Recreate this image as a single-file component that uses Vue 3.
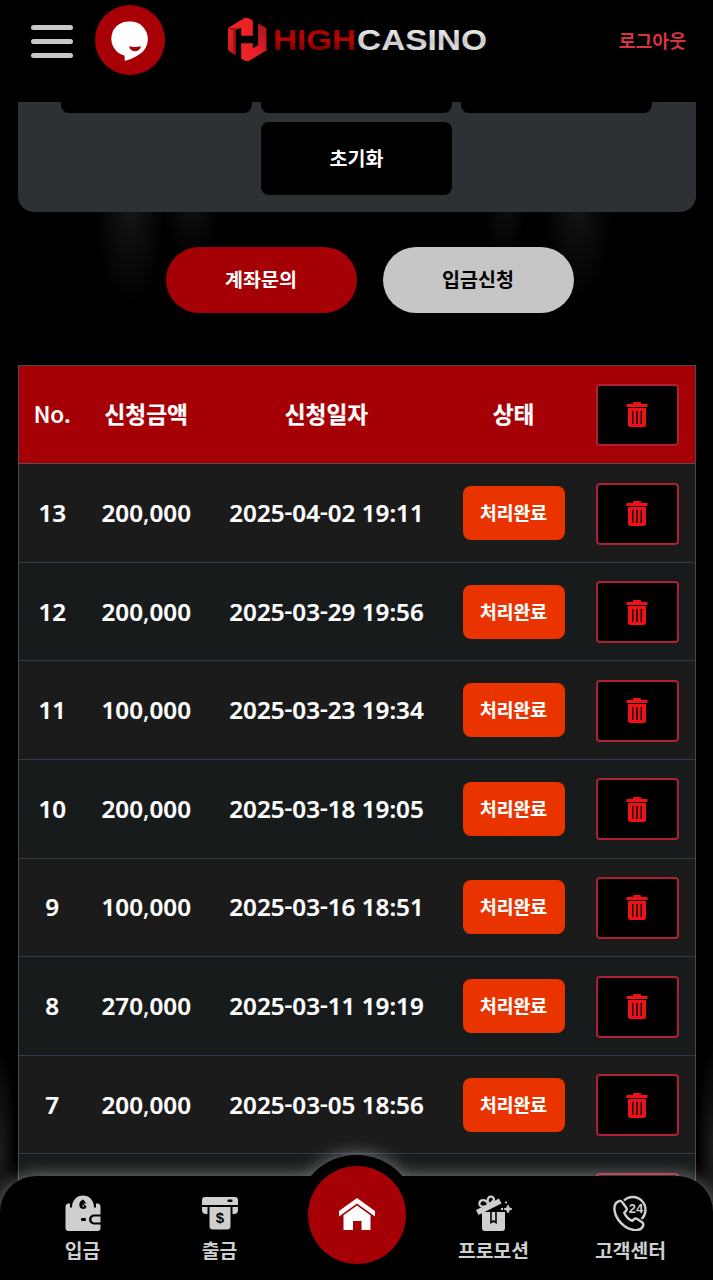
<template>
  <div class="page">
    <header class="header">
      <div class="header-left">
        <button class="menu-btn" aria-label="메뉴">
          <span></span>
          <span></span>
          <span></span>
        </button>
        <button class="chat-btn" aria-label="채팅">
          <svg width="70" height="70" viewBox="0 0 70 70">
            <path d="M35.500 16.500A17.300 17.300 0 0 1 52.800 34c0 8-4.500 13.500-11 17-4 2-8 4-12 5l-.3-5.500A17.300 17.300 0 0 1 35.500 16.500z" fill="#fff" />
            <path d="M34 41.300c3.700 1 8.300 1 12 0-.7 3.500-3.200 5-6 5s-5.300-1.500-6-5z" fill="#a90008" />
          </svg>
        </button>
      </div>

      <svg class="logo" width="264" height="48" viewBox="0 0 264 48">
        <defs>
          <linearGradient id="markTop" x1="0" y1="1" x2="1" y2="0">
            <stop offset="0" stop-color="#c41a22" />
            <stop offset="0.500" stop-color="#f02226" />
            <stop offset="1" stop-color="#ea1f24" />
          </linearGradient>
          <linearGradient id="markBottom" x1="0" y1="1" x2="1" y2="0">
            <stop offset="0" stop-color="#f6222a" />
            <stop offset="0.500" stop-color="#e31f26" />
            <stop offset="1" stop-color="#9e141b" />
          </linearGradient>
          <linearGradient id="highFill" x1="0" y1="0" x2="0" y2="1">
            <stop offset="0" stop-color="#8d0000" />
            <stop offset="0.450" stop-color="#bd0600" />
            <stop offset="1" stop-color="#5c0000" />
          </linearGradient>
          <linearGradient id="casinoFill" x1="0" y1="0" x2="0" y2="1">
            <stop offset="0" stop-color="#fff" />
            <stop offset="0.550" stop-color="#c9c9c9" />
            <stop offset="1" stop-color="#ededed" />
          </linearGradient>
        </defs>
        <path d="M3 12 19 2.300q2.500-1.200 5 0l3.800 2.200v15.200H16.200v-8L10.500 14v25L3 34.500z" fill="url(#markTop)" />
        <path d="M3 12 16.200 11.700 10.500 14v25L8 37.500V15z" fill="#a5131b" />
        <path d="M16.200 27.300h11.600v5l5.400-3V7.300l8.300 5V34.500L24.500 44.500q-2.500 1.200-5 0l-3.300-2z" fill="url(#markBottom)" />
        <text x="48" y="34" class="logo-text" fill="url(#highFill)" textLength="83" lengthAdjust="spacingAndGlyphs">HIGH</text>
        <text x="132" y="34" class="logo-text" fill="url(#casinoFill)" textLength="130" lengthAdjust="spacingAndGlyphs">CASINO</text>
      </svg>

      <a class="logout">로그아웃</a>
    </header>

    <main class="content">
      <section class="amount-panel">
        <button class="amount-btn"></button>
        <button class="amount-btn"></button>
        <button class="amount-btn"></button>
        <button class="amount-btn">초기화</button>
      </section>

      <div class="actions">
        <button class="pill pill-red">계좌문의</button>
        <button class="pill pill-gray">입금신청</button>
      </div>

      <section class="table">
        <div class="row row-head">
          <div class="cell no">No.</div>
          <div class="cell">신청금액</div>
          <div class="cell">신청일자</div>
          <div class="cell">상태</div>
          <div class="cell">
            <button class="trash-btn" aria-label="전체삭제">
              <svg width="22" height="25" viewBox="0 0 22 25">
                <path :d="trashPath" fill="#ee1118" fill-rule="evenodd" />
              </svg>
            </button>
          </div>
        </div>
        <div v-for="item in deposits" :key="item.no" class="row">
          <div class="cell">{{ item.no }}</div>
          <div class="cell">
            <span v-for="(part, i) in splitMarks(item.amount)" :key="i" :class="{ comma: part === ',' }">{{ part }}</span>
          </div>
          <div class="cell">
            <span v-for="(part, i) in splitMarks(item.date)" :key="i" :class="{ dash: part === '-' }">{{ part }}</span>
          </div>
          <div class="cell"><span class="badge">처리완료</span></div>
          <div class="cell">
            <button class="trash-btn" aria-label="삭제">
              <svg width="22" height="25" viewBox="0 0 22 25">
                <path :d="trashPath" fill="#ee1118" fill-rule="evenodd" />
              </svg>
            </button>
          </div>
        </div>
      </section>
    </main>

    <nav class="bottom-nav">
      <div class="nav-shape">
        <span class="nav-bump"></span>
        <span class="nav-bar"></span>
      </div>
      <div class="nav-items">
        <a class="nav-item">
          <svg width="36" height="36" viewBox="0 0 36 36">
            <path d="M3 8.500h2v4h2C7 5 12 .5 18 .5S29 5 29 12.500h2v-4h2q2.500.5 2.500 3v8H29a5 5 0 0 0 0 10h6.500V33q0 3-3 3h-29q-3 0-3-3V11.500q0-2.500 2.500-3z" fill="#cfcfcf" />
            <path d="M35.500 21.500H29.500a3 3 0 0 0 0 6h6z" fill="#cfcfcf" />
            <rect x="16" y="23" width="5" height="3" rx="1" fill="#000" />
            <path d="M18 4.500 21.500 8.500h-3.300l3.300 3q-.5 2.500-3.500 2.500-3.700-.5-3.700-4.500Q14.500 6 18 4.500z" fill="#000" />
            <path d="M17.500 9v2.500l2 .8z" fill="#cfcfcf" />
          </svg>
          <span>입금</span>
        </a>
        <a class="nav-item">
          <svg width="36" height="36" viewBox="0 0 36 36">
            <path d="M3 2h30q3 0 3 3v5H0V5q0-3 3-3zM0 12h5.500v7H4q-4 0-4-4zM30.500 12H36v3q0 4-4 4h-1.500zM7.500 12h21v19q0 3.500-3.500 3.500H11q-3.500 0-3.500-3.500z" fill="#cfcfcf" />
            <rect x="25.500" y="4.500" width="5" height="2.500" rx="1" fill="#000" />
            <text x="18" y="27.500" class="dollar" text-anchor="middle">$</text>
          </svg>
          <span>출금</span>
        </a>
        <a class="home-btn" aria-label="홈">
          <svg width="36" height="32" viewBox="0 0 36 32">
            <path d="M18 0 36 13v5.500L18 5.500 0 18.500V13z" fill="#fff" />
            <path d="M18 7.500 31.500 17.300V32H22.500v-9h-8.500v9H4.500V17.300z" fill="#fff" />
          </svg>
        </a>
        <a class="nav-item">
          <svg width="36" height="36" viewBox="0 0 36 36">
            <path d="M6 17h23v16q0 3-3 3H9q-3 0-3-3z" fill="#cfcfcf" />
            <path d="M15 17v10.500l2.500-1.500 2.500 1.500V17" fill="none" stroke="#000" stroke-width="1.600" />
            <path d="M0 15 23 3.500l2.500 5L2.500 20z" fill="#cfcfcf" />
            <path d="M12.500 9.500C8 13 2.500 12 3.500 7.500 5 4 10 4 12.500 9.500zM12.500 9C10.500 4 12.500.8 16 1.700c3.500 1.800 2 5.300-3.500 7.300z" fill="none" stroke="#cfcfcf" stroke-width="2.200" />
            <path d="M32 10q.4 3.600 4 4-3.600.4-4 4-.4-3.600-4-4 3.600-.4 4-4z" fill="#cfcfcf" stroke="#cfcfcf" stroke-width="1" />
            <circle cx="30" cy="7.500" r="1.100" fill="#cfcfcf" />
            <circle cx="26" cy="14" r="1.200" fill="#cfcfcf" />
          </svg>
          <span>프로모션</span>
        </a>
        <a class="nav-item">
          <svg width="36" height="36" viewBox="0 0 36 36">
            <path d="M11 5.500A12.500 12.500 0 1 1 28.500 24" fill="none" stroke="#cfcfcf" stroke-width="2.400" />
            <path d="M6.500 6C3 7 1 10.500 1.500 15c1 9 9.500 18.500 19.500 20 4.500.5 8-1 9.200-4.500.4-1.300 0-2.300-.9-3l-5-3.500c-1.200-.8-2.400-.7-3.300.2l-1.700 1.700c-3.700-1.600-6.600-4.700-8-8.200l1.700-1.800c.9-1 1-2 .3-3.200L9.500 7.500Q8.300 5.500 6.500 6z" fill="none" stroke="#cfcfcf" stroke-width="2.400" />
            <text x="23" y="17.500" class="hours" text-anchor="middle">24</text>
          </svg>
          <span>고객센터</span>
        </a>
      </div>
    </nav>
  </div>
</template>

<script setup>
import { ref } from 'vue'

const trashPath = 'M7 2V1q0-1 1-1h6q1 0 1 1v1h6.500v3H.5V2zM2 6h18v16.500q0 2.500-2.500 2.500h-13Q2 25 2 22.500zM6 9v13h1.400V9zM10.300 9v13h1.400V9zM14.600 9v13H16V9z'

const deposits = ref([
  { no: 13, amount: '200,000', date: '2025-04-02 19:11' },
  { no: 12, amount: '200,000', date: '2025-03-29 19:56' },
  { no: 11, amount: '100,000', date: '2025-03-23 19:34' },
  { no: 10, amount: '200,000', date: '2025-03-18 19:05' },
  { no: 9, amount: '100,000', date: '2025-03-16 18:51' },
  { no: 8, amount: '270,000', date: '2025-03-11 19:19' },
  { no: 7, amount: '200,000', date: '2025-03-05 18:56' },
  { no: '', amount: '', date: '' }
])

// Separates digits from commas and dashes so the marks can be styled
const splitMarks = (text) => text.split(/([,-])/)
</script>

<style>
body {
  background: #000;
}
</style>

<style scoped>
* {
  box-sizing: border-box;
}

.page {
  position: relative;
  display: flex;
  flex-direction: column;
  height: 100vh;
  overflow: hidden;
  background: #000;
  color: #fff;
  font-family: 'Noto Sans', 'Noto Sans CJK KR', sans-serif;
}

button {
  padding: 0;
  border: none;
  font-family: 'Noto Sans CJK KR', sans-serif;
  font-weight: 700;
  cursor: pointer;
}

/* Header */
.header {
  display: grid;
  grid-template-columns: 1fr 264px 1fr;
  align-items: center;
  flex-shrink: 0;
  height: 102px;
  padding: 0 27px 22px 31px;
}

.header-left {
  display: flex;
  align-items: center;
  gap: 22px;
}

.menu-btn {
  display: flex;
  flex-direction: column;
  gap: 9px;
  width: 42px;
  padding-top: 3px;
  background: none;
}

.menu-btn span {
  height: 5px;
  border-radius: 3px;
  background: #c8c8c8;
}

.chat-btn {
  width: 70px;
  height: 70px;
  border-radius: 50%;
  background: #a90008;
}

.chat-btn svg {
  display: block;
}

.logo {
  margin: 0 0 1px -2px;
}

.logo-text {
  font-family: 'Liberation Sans', sans-serif;
  font-size: 30px;
  font-weight: 700;
}

.logout {
  justify-self: end;
  font-family: 'Noto Sans CJK KR', sans-serif;
  font-size: 18.300px;
  font-weight: 700;
  color: #d5353f;
}

/* Content */
.content {
  flex: 1;
  min-height: 0;
  overflow: hidden;
  padding: 0 17.500px;
  background:
    radial-gradient(ellipse 36px 105px at 130px 100px, #171717, transparent),
    radial-gradient(ellipse 30px 80px at 192px 85px, #141414, transparent),
    radial-gradient(ellipse 22px 75px at 505px 85px, #131313, transparent),
    radial-gradient(ellipse 36px 105px at 578px 95px, #161616, transparent),
    radial-gradient(ellipse 16px 110px at 0 1050px, #1c1c1c, transparent),
    radial-gradient(ellipse 16px 110px at 713px 1050px, #1c1c1c, transparent),
    #000;
}

.amount-panel {
  display: flex;
  flex-wrap: wrap;
  justify-content: center;
  gap: 8.700px;
  margin-top: -79px;
  padding: 17px 40px;
  border-radius: 16px;
  background: #2d3035;
}

.amount-btn {
  width: 191px;
  height: 73px;
  padding-bottom: 2px;
  border-radius: 8px;
  background: #000;
  color: #fff;
  font-size: 19.500px;
}

.actions {
  display: flex;
  justify-content: center;
  margin: 35px 0 52px;
}

.pill {
  width: 191px;
  height: 66px;
  margin-left: 26px;
  padding-bottom: 2px;
  border-radius: 33px;
  font-size: 19.500px;
}

.pill-red {
  background: #a50006;
  color: #fff;
}

.pill-gray {
  background: #c6c6c6;
  color: #000;
}

/* Table */
.table {
  border: 1px solid #4a4a4c;
}

.row {
  display: grid;
  grid-template-columns: 67.500px 120.500px 240px 134px 1fr;
  height: 98.600px;
  border-bottom: 1px solid #303c4e;
  background: #1b1b1b;
}

.row:nth-child(odd) {
  background: #171b1c;
}

.row.row-head {
  border-bottom-color: #5b4a4e;
  background: #a50006;
}

.cell {
  display: flex;
  align-items: center;
  justify-content: center;
  padding-bottom: 1px;
  font-size: 24.200px;
  font-weight: 600;
  white-space: pre;
  -webkit-text-stroke: 0.200px currentColor;
}

.cell:last-child {
  padding: 1px 1px 0 0;
}

.row-head .cell {
  font-size: 22.700px;
  font-weight: 700;
}

.row-head .no {
  font-family: 'Noto Sans CJK KR', sans-serif;
  font-weight: 500;
}

.comma {
  font-weight: 400;
}

.dash {
  padding-bottom: 4px;
}

.badge {
  width: 102px;
  height: 54px;
  margin-top: 1px;
  border-radius: 8px;
  background: #e93400;
  font-family: 'Noto Sans CJK KR', sans-serif;
  font-size: 18.200px;
  font-weight: 700;
  line-height: 53px;
  text-align: center;
}

.trash-btn {
  display: flex;
  align-items: center;
  justify-content: center;
  width: 83px;
  height: 62px;
  border: 2px solid #ae2033;
  border-radius: 4px;
  background: #000;
}

/* Bottom navigation */
.bottom-nav {
  position: absolute;
  right: 0;
  bottom: 0;
  left: 0;
  height: 104px;
}

.nav-shape {
  position: absolute;
  inset: 0;
  filter: drop-shadow(0 0 9px rgba(255, 255, 255, 0.450));
}

.nav-bar {
  position: absolute;
  inset: 0;
  border-radius: 36px 36px 0 0;
  background: #000;
}

.nav-bump {
  position: absolute;
  top: -21px;
  left: calc(50% - 60.500px);
  width: 121px;
  height: 121px;
  border-radius: 50%;
  background: #000;
}

.nav-items {
  position: relative;
  display: grid;
  grid-template-columns: repeat(5, 1fr);
  height: 100%;
  padding: 0 14px;
}

.nav-item {
  display: flex;
  flex-direction: column;
  align-items: center;
  padding-top: 19px;
  font-family: 'Noto Sans CJK KR', sans-serif;
  font-size: 19.300px;
  font-weight: 700;
  line-height: 39px;
  color: #cfcfcf;
}

.home-btn {
  display: flex;
  align-items: center;
  justify-content: center;
  justify-self: center;
  width: 98px;
  height: 98px;
  margin-top: -10px;
  padding-bottom: 3px;
  border-radius: 50%;
  background: #a50006;
}

.dollar {
  fill: #000;
  font-family: 'Liberation Sans', sans-serif;
  font-size: 15px;
  font-weight: 700;
}

.hours {
  fill: #cfcfcf;
  font-family: 'Liberation Sans', sans-serif;
  font-size: 13px;
  font-weight: 700;
}
</style>
